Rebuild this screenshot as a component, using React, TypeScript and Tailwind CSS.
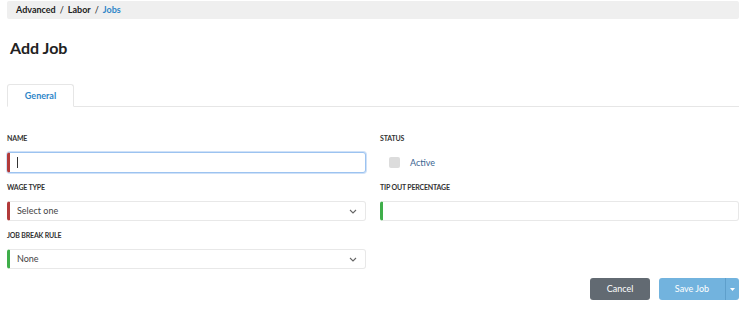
function Chevron() {
  return (
    <svg width="8" height="5" viewBox="0 0 8 5" fill="none" stroke="#666" strokeWidth="1.1">
      <path d="M1 1l3 3 3-3" />
    </svg>
  );
}

function Label({ children }: { children: React.ReactNode }) {
  return <div className="text-[7px] font-bold uppercase tracking-tight text-[#333] h-[10px] leading-[10px]">{children}</div>;
}

function Select({ value, accent }: { value: string; accent: string }) {
  return (
    <div className={`flex h-[20px] items-center justify-between rounded-[3px] border border-[#e8e8e8] border-l-[3px] ${accent} pl-[7px] pr-[8px]`}>
      <span className="text-[9px] text-[#444]">{value}</span>
      <Chevron />
    </div>
  );
}

export default function App() {
  return (
    <div className="w-[750px] h-[309px] bg-white pl-[7px] pr-[11px] pt-[1px] font-['Lato',sans-serif] text-[#222]">
      <div className="h-[18px] bg-[#efefef] rounded-[2px] flex items-center pl-[9px] text-[9px] font-bold">
        <span>Advanced</span>
        <span className="mx-[4px] font-normal">/</span>
        <span>Labor</span>
        <span className="mx-[4px] font-normal">/</span>
        <span className="text-[#2f86c8]">Jobs</span>
      </div>

      <h1 className="mt-[19px] ml-[3px] text-[16px] font-bold leading-[20px]">Add Job</h1>

      <div className="mt-[26px] flex border-b border-[#e6e6e6]">
        <div className="w-[67px] h-[23px] -mb-px rounded-t-[3px] border border-[#e6e6e6] border-b-white bg-white flex items-center justify-center text-[9px] font-bold text-[#2f86c8]">
          General
        </div>
      </div>

      <div className="mt-[26px] grid grid-cols-2 gap-x-[14px]">
        <div>
          <Label>NAME</Label>
          <div className="mt-[9px] h-[21px] rounded-[3px] border border-[#9cc3f0] border-l-[3px] border-l-[#b23a3a] shadow-[0_0_0_1px_#cfe1f8] flex items-center pl-[7px]">
            <span className="w-px h-[11px] bg-[#333]" />
          </div>
        </div>
        <div>
          <Label>STATUS</Label>
          <div className="mt-[9px] h-[21px] flex items-center pl-[9px]">
            <span className="w-[11px] h-[11px] rounded-[2px] bg-[#dcdcdc]" />
            <span className="ml-[10px] text-[9px] text-[#3b6591]">Active</span>
          </div>
        </div>

        <div className="mt-[9px]">
          <Label>WAGE TYPE</Label>
          <div className="mt-[9px]">
            <Select value="Select one" accent="border-l-[#b23a3a]" />
          </div>
        </div>
        <div className="mt-[9px]">
          <Label>TIP OUT PERCENTAGE</Label>
          <div className="mt-[9px] h-[20px] rounded-[3px] border border-[#e8e8e8] border-l-[3px] border-l-[#3fae4a]" />
        </div>

        <div className="mt-[9px]">
          <Label>JOB BREAK RULE</Label>
          <div className="mt-[9px]">
            <Select value="None" accent="border-l-[#3fae4a]" />
          </div>
        </div>
        <div />
      </div>

      <div className="mt-[9px] flex justify-end gap-[9px]">
        <button className="w-[60px] h-[22px] rounded-[3px] bg-[#626a72] text-white text-[9px]">Cancel</button>
        <div className="flex h-[22px] rounded-[3px] bg-[#72b3de] text-white text-[9px] overflow-hidden">
          <span className="w-[66px] flex items-center justify-center">Save Job</span>
          <span className="w-[14px] border-l border-[#5e9fcb] flex items-center justify-center">
            <svg width="5" height="3" viewBox="0 0 5 3"><path d="M0 0h5L2.5 3z" fill="#fff" /></svg>
          </span>
        </div>
      </div>
    </div>
  );
}
